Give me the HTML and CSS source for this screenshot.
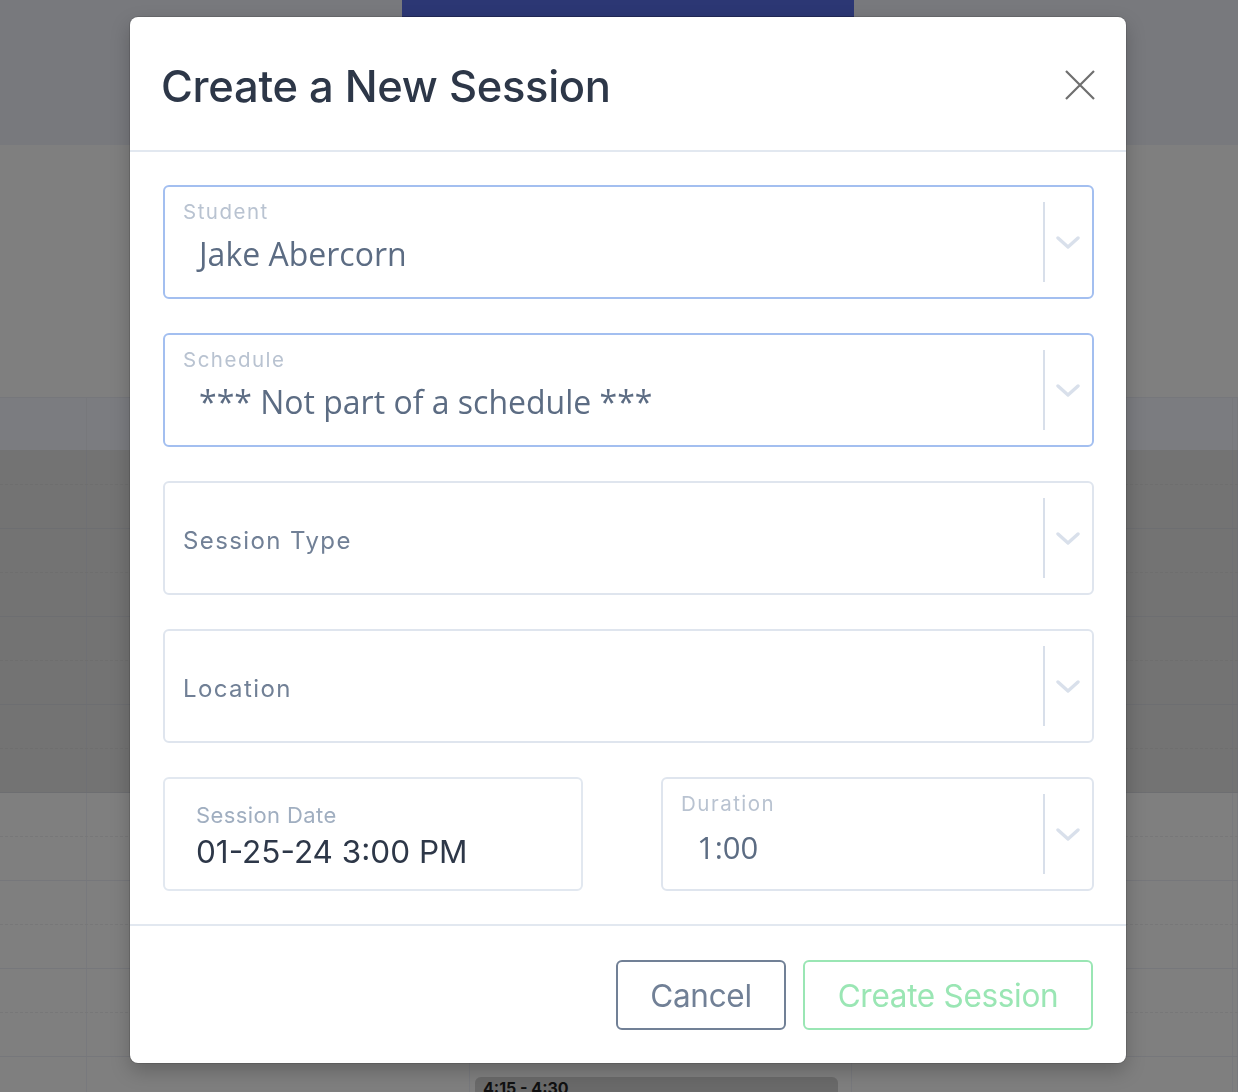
FILE: index.html
```html
<!DOCTYPE html>
<html lang="en">
<head>
<meta charset="utf-8">
<title>Create a New Session</title>
<link rel="stylesheet" href="styles.css">
</head>
<body>
<div class="app">
  <header class="topbar"><div class="topbtn"></div></header>
  <div class="toolbar"></div>
  <div class="cal">
    <div class="cal-head row"><div class="c"></div><div class="c"></div><div class="c"></div><div class="c"></div><div class="c"></div></div>
    <div class="band">
      <div class="row slot first dot"><div class="c"></div><div class="c"></div><div class="c"></div><div class="c"></div><div class="c"></div></div>
      <div class="row slot"><div class="c"></div><div class="c"></div><div class="c"></div><div class="c"></div><div class="c"></div></div>
      <div class="row slot dot"><div class="c"></div><div class="c"></div><div class="c"></div><div class="c"></div><div class="c"></div></div>
      <div class="row slot"><div class="c"></div><div class="c"></div><div class="c"></div><div class="c"></div><div class="c"></div></div>
      <div class="row slot dot"><div class="c"></div><div class="c"></div><div class="c"></div><div class="c"></div><div class="c"></div></div>
      <div class="row slot"><div class="c"></div><div class="c"></div><div class="c"></div><div class="c"></div><div class="c"></div></div>
      <div class="row slot dot"><div class="c"></div><div class="c"></div><div class="c"></div><div class="c"></div><div class="c"></div></div>
      <div class="row slot last"><div class="c"></div><div class="c"></div><div class="c"></div><div class="c"></div><div class="c"></div></div>
    </div>
    <div class="lower">
      <div class="row slot dot"><div class="c"></div><div class="c"></div><div class="c"></div><div class="c"></div><div class="c"></div></div>
      <div class="row slot"><div class="c"></div><div class="c"></div><div class="c"></div><div class="c"></div><div class="c"></div></div>
      <div class="row slot dot"><div class="c"></div><div class="c"></div><div class="c"></div><div class="c"></div><div class="c"></div></div>
      <div class="row slot"><div class="c"></div><div class="c"></div><div class="c"></div><div class="c"></div><div class="c"></div></div>
      <div class="row slot dot"><div class="c"></div><div class="c"></div><div class="c"></div><div class="c"></div><div class="c"></div></div>
      <div class="row slot"><div class="c"></div><div class="c"></div><div class="c"></div><div class="c"></div><div class="c"></div></div>
      <div class="row slot dot"><div class="c"></div><div class="c"></div><div class="c"><div class="event">4:15 - 4:30</div></div><div class="c"></div><div class="c"></div></div>
    </div>
  </div>
</div>

<div class="modal">
  <div class="modal-head">
    <h1 class="title">Create a New Session</h1>
    <svg class="close" width="30" height="30" viewBox="0 0 30 30"><path d="M1 1 L29 29 M29 1 L1 29" stroke="#6f6f6f" stroke-width="2.2" fill="none"/></svg>
  </div>
  <div class="modal-body">
    <div class="select focus">
      <div class="sel-main">
        <div class="sel-label">Student</div>
        <div class="sel-value">Jake Abercorn</div>
      </div>
      <div class="sel-ind"><span class="sep"></span><svg class="chev" width="24" height="16" viewBox="0 0 24 16"><path d="M2 3 L12 12 L22 3" stroke="#d9e0eb" stroke-width="3.4" fill="none" stroke-linecap="round" stroke-linejoin="round"/></svg></div>
    </div>
    <div class="select focus">
      <div class="sel-main">
        <div class="sel-label">Schedule</div>
        <div class="sel-value">*** Not part of a schedule ***</div>
      </div>
      <div class="sel-ind"><span class="sep"></span><svg class="chev" width="24" height="16" viewBox="0 0 24 16"><path d="M2 3 L12 12 L22 3" stroke="#d9e0eb" stroke-width="3.4" fill="none" stroke-linecap="round" stroke-linejoin="round"/></svg></div>
    </div>
    <div class="select">
      <div class="sel-main center">
        <div class="sel-place">Session Type</div>
      </div>
      <div class="sel-ind"><span class="sep"></span><svg class="chev" width="24" height="16" viewBox="0 0 24 16"><path d="M2 3 L12 12 L22 3" stroke="#d9e0eb" stroke-width="3.4" fill="none" stroke-linecap="round" stroke-linejoin="round"/></svg></div>
    </div>
    <div class="select">
      <div class="sel-main center">
        <div class="sel-place">Location</div>
      </div>
      <div class="sel-ind"><span class="sep"></span><svg class="chev" width="24" height="16" viewBox="0 0 24 16"><path d="M2 3 L12 12 L22 3" stroke="#d9e0eb" stroke-width="3.4" fill="none" stroke-linecap="round" stroke-linejoin="round"/></svg></div>
    </div>
    <div class="pair">
      <div class="datebox">
        <div class="date-label">Session Date</div>
        <div class="date-value">01-25-24 3:00 PM</div>
      </div>
      <div class="select">
        <div class="sel-main small">
          <div class="sel-label">Duration</div>
          <div class="sel-value">1:00</div>
        </div>
        <div class="sel-ind"><span class="sep"></span><svg class="chev" width="24" height="16" viewBox="0 0 24 16"><path d="M2 3 L12 12 L22 3" stroke="#d9e0eb" stroke-width="3.4" fill="none" stroke-linecap="round" stroke-linejoin="round"/></svg></div>
      </div>
    </div>
  </div>
  <div class="modal-foot">
    <button class="btn cancel">Cancel</button>
    <button class="btn create">Create Session</button>
  </div>
</div>
</body>
</html>
```
FILE: styles.css
```css
html, body {
  margin: 0;
  padding: 0;
}
body {
  width: 1238px;
  height: 1092px;
  overflow: hidden;
  background: #7f7f7f;
  font-family: "Inter", "Liberation Sans", sans-serif;
}
.app {
  display: flex;
  flex-direction: column;
}
.topbar {
  height: 145px;
  background: #78797d;
}
.topbtn {
  margin-left: 402px;
  width: 452px;
  height: 16px;
  background: #2c3774;
  border-bottom: 1px solid #262e63;
}
.toolbar {
  height: 252px;
  background: #7f7f7f;
}
.row {
  display: grid;
  grid-template-columns: 87px 383px 382px 381px 1fr;
}
.row .c {
  border-right: 1px solid #77787c;
}
.cal-head {
  height: 52px;
  border-top: 1px solid #76777b;
  background: #7b7c80;
}
.band {
  background: #737373;
}
.band .row .c {
  border-right-color: #6f7074;
}
.slot {
  height: 43px;
  border-bottom: 1px solid #76777b;
}
.band .slot {
  border-bottom-color: #6d6e71;
}
.slot.dot {
  border-bottom: 1px dashed #777778;
}
.band .slot.dot {
  border-bottom: 1px dashed #6e6e6e;
}
.slot.first {
  height: 34px;
}
.lower .slot .c {
  border-right-color: #78797d;
}
.event {
  margin: 20px 13px 0 5px;
  height: 30px;
  border-radius: 6px;
  background: #6a6a6a;
  color: #111;
  font-weight: 700;
  font-size: 16px;
  padding: 0 8px;
  line-height: 22px;
}

/* modal */
.modal {
  position: fixed;
  left: 130px;
  top: 17px;
  width: 996px;
  height: 1046px;
  box-sizing: border-box;
  background: #fff;
  border-radius: 8px;
  box-shadow: 0 0 0 1px rgba(0,0,0,0.12), 0 8px 20px rgba(0,0,0,0.22);
  display: flex;
  flex-direction: column;
}
.modal-head {
  height: 133px;
  border-bottom: 2px solid #e2e8f0;
  display: flex;
  align-items: center;
  justify-content: space-between;
  padding: 0 31px 0 33px;
}
.title {
  margin: 0;
  font-family: "Inter", sans-serif;
  font-weight: 500;
  font-size: 43.5px;
  letter-spacing: -0.3px;
  color: #2d3748;
  padding-top: 4px;
  margin-left: -2px;
}
.close {
  display: block;
  margin-top: 2px;
}
.modal-body {
  padding: 33px 32px 33px 33px;
  display: flex;
  flex-direction: column;
  gap: 34px;
}
.select {
  height: 114px;
  box-sizing: border-box;
  border: 2px solid #dfe5ee;
  border-radius: 6px;
  display: flex;
}
.select.focus {
  border-color: #a3bff0;
}
.sel-main {
  flex: 1;
  padding: 13px 0 0 18px;
}
.sel-main.center {
  padding: 5px 0 0 18px;
  display: flex;
  align-items: center;
}
.sel-label {
  font-family: "Inter", sans-serif;
  font-size: 20.5px;
  letter-spacing: 1.5px;
  color: #b9c3d1;
  line-height: 24px;
}
.sel-value {
  font-family: "Open Sans", sans-serif;
  font-size: 32px;
  color: #5c6c83;
  padding-left: 16px;
  line-height: 40px;
  margin-top: 10px;
}
.sel-main.small {
  padding-top: 13px;
}
.sel-main.small .sel-value {
  margin-top: 11px;
  font-size: 31px;
}
.sel-place {
  font-family: "Inter", sans-serif;
  font-size: 24px;
  letter-spacing: 1.4px;
  color: #718096;
}
.sel-ind {
  width: 49px;
  display: flex;
  align-items: center;
  position: relative;
}
.sep {
  width: 2px;
  align-self: stretch;
  margin: 15px 0;
  background: #d8dfea;
}
.chev {
  display: block;
  margin-left: 11px;
  margin-top: 1px;
}
.pair {
  display: grid;
  grid-template-columns: 420px 1fr;
  gap: 78px;
}
.datebox {
  height: 114px;
  box-sizing: border-box;
  border: 2px solid #e2e8f0;
  border-radius: 6px;
  padding: 22px 0 0 31px;
}
.date-label {
  font-family: "Inter", sans-serif;
  font-size: 22px;
  letter-spacing: 0.4px;
  color: #a0aec0;
  line-height: 28px;
}
.date-value {
  font-family: "Inter", sans-serif;
  font-size: 31.5px;
  color: #2d3748;
  line-height: 40px;
  margin-top: 3px;
}
.modal-foot {
  border-top: 2px solid #e2e8f0;
  padding: 34px 33px 0 0;
  display: flex;
  justify-content: flex-end;
  gap: 17px;
}
.btn {
  height: 70px;
  box-sizing: border-box;
  border-radius: 6px;
  background: #fff;
  font-family: "Inter", sans-serif;
  font-size: 31.5px;
  letter-spacing: -0.3px;
  padding: 0;
  margin: 0;
}
.cancel {
  border: 2px solid #718096;
  color: #718096;
  width: 170px;
}
.create {
  border: 2px solid #9ae6b4;
  color: #9ae6b4;
  width: 290px;
}
```
